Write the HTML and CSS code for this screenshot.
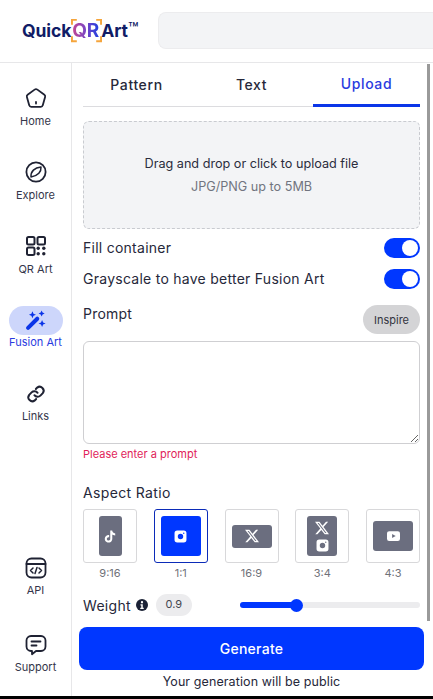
FILE: index.html
```html
<!DOCTYPE html>
<html lang="en">
<head>
<meta charset="utf-8">
<title>QuickQRArt</title>
<link rel="stylesheet" href="styles.css">
</head>
<body>
<div class="app">
  <header class="topbar">
    <div class="logo">
      <span>Quick</span>
      <span class="logo-qr">QR
        <svg class="logo-brackets" viewBox="0 0 32 24" fill="none" stroke="#f5a53c" stroke-width="2"><path d="M6 1H1v5M26 1h5v5M6 23H1v-5M26 23h5v-5"/></svg>
      </span>
      <span class="logo-art">Art</span><span class="logo-tm">™</span>
    </div>
    <div class="search"></div>
  </header>
  <div class="body">
    <nav class="sidebar">
      <a class="nav-item">
        <svg class="nav-icon" viewBox="0 0 24 24" fill="none" stroke="#1f2233" stroke-width="1.8" stroke-linejoin="round"><path d="M10.6 3.6a2.3 2.3 0 0 1 2.8 0l7 5.200a2 2 0 0 1 .7 2.200l-2.400 8.400a2 2 0 0 1-1.900 1.500H7.200a2 2 0 0 1-1.900-1.500L2.900 11a2 2 0 0 1 .7-2.200z"/><path d="M12 16v1.600" stroke-linecap="round"/></svg>
        <span>Home</span>
      </a>
      <a class="nav-item">
        <svg class="nav-icon" viewBox="0 0 24 24" fill="none" stroke="#1f2233" stroke-width="1.8" stroke-linejoin="round"><circle cx="12" cy="12" r="9.6"/><path d="M17 7c.4 4.600-2.800 9-10 10C6.600 11.500 10.500 7.500 17 7z" stroke-width="1.500"/></svg>
        <span>Explore</span>
      </a>
      <a class="nav-item">
        <svg class="nav-icon" viewBox="0 0 24 24" fill="none" stroke="#1f2233" stroke-width="2"><rect x="3" y="3" width="7.500" height="7.500" rx="1.500"/><rect x="13.500" y="3" width="7.500" height="7.500" rx="1.500"/><rect x="3" y="13.500" width="7.500" height="7.500" rx="1.500"/><g fill="#1f2233" stroke="none"><circle cx="14.200" cy="14.200" r="1.700"/><circle cx="19.800" cy="14.200" r="1.700"/><circle cx="14.200" cy="19.800" r="1.700"/><circle cx="19.800" cy="19.800" r="1.700"/></g></svg>
        <span>QR Art</span>
      </a>
      <a class="nav-item nav-item-active">
        <span class="nav-pill">
          <svg class="nav-icon" viewBox="0 0 24 24" fill="#0b35e8"><path d="M3.500 20.500L14 10" stroke="#0b35e8" stroke-width="4.600" stroke-linecap="round"/><path d="M8.500 1.500l1.200 2.800 2.800 1.200-2.800 1.200-1.200 2.800-1.200-2.800-2.800-1.200 2.800-1.200zM19 .5l1.100 2.400 2.400 1.100-2.400 1.100L19 7.500l-1.100-2.400L15.500 4l2.400-1.100zM19.500 11.500l1.200 2.800 2.800 1.200-2.800 1.200-1.200 2.800-1.200-2.800-2.800-1.200 2.800-1.200z"/></svg>
        </span>
        <span>Fusion Art</span>
      </a>
      <a class="nav-item nav-item-tight">
        <svg class="nav-icon" viewBox="-3 -3 30 30" fill="none" stroke="#1f2233" stroke-width="2.500" stroke-linecap="round"><path d="M10 13.500a5 5 0 0 0 7.500.5l3-3a5 5 0 0 0-7-7l-1.700 1.700"/><path d="M14 10.500a5 5 0 0 0-7.500-.5l-3 3a5 5 0 0 0 7 7l1.700-1.700"/></svg>
        <span>Links</span>
      </a>
      <a class="nav-item nav-item-tight nav-item-api">
        <svg class="nav-icon" viewBox="0 0 24 24" fill="none" stroke="#1f2233" stroke-width="1.800" stroke-linecap="round" stroke-linejoin="round"><rect x="2.500" y="2.500" width="19" height="19" rx="5"/><path d="M2.500 8h19" /><path d="M9 12l-2.500 2.500L9 17M15 12l2.500 2.500L15 17M13 11.500l-2 6" stroke-width="1.500"/></svg>
        <span>API</span>
      </a>
      <a class="nav-item nav-item-tight nav-item-last">
        <svg class="nav-icon" viewBox="0 0 24 24" fill="none" stroke="#1f2233" stroke-width="1.800" stroke-linecap="round" stroke-linejoin="round"><path d="M7 3h10a4.500 4.500 0 0 1 4.500 4.500v6A4.500 4.500 0 0 1 17 18h-5l-4 3.200V18H7a4.500 4.500 0 0 1-4.500-4.500v-6A4.500 4.500 0 0 1 7 3z"/><path d="M7.500 8.500h9M7.500 12.500h5"/></svg>
        <span>Support</span>
      </a>
    </nav>
    <main class="main">
      <div class="tabs">
        <button class="tab">Pattern</button>
        <button class="tab">Text</button>
        <button class="tab tab-active">Upload</button>
      </div>
      <div class="dropzone">
        <p class="drop-title">Drag and drop or click to upload file</p>
        <p class="drop-hint">JPG/PNG up to 5MB</p>
      </div>
      <div class="switch-row"><span class="switch-text">Fill container</span><span class="switch"></span></div>
      <div class="switch-row switch-row-second"><span class="switch-text">Grayscale to have better Fusion Art</span><span class="switch"></span></div>
      <div class="prompt-head"><span>Prompt</span><button class="inspire">Inspire</button></div>
      <textarea class="prompt-input"></textarea>
      <p class="error">Please enter a prompt</p>
      <h2 class="section-label">Aspect Ratio</h2>
      <div class="ratios">
        <div class="ratio">
          <div class="ratio-box"><div class="shape shape-9-16">
            <svg class="glyph-tiktok" viewBox="0 0 24 24" fill="#fff"><path d="M12.525.02c1.310-.02 2.610-.01 3.910-.02.08 1.530.63 3.090 1.750 4.170 1.120 1.110 2.700 1.620 4.240 1.790v4.030c-1.440-.05-2.890-.35-4.200-.97-.57-.26-1.100-.59-1.620-.93-.01 2.920.01 5.840-.02 8.750-.08 1.400-.54 2.790-1.350 3.940-1.310 1.920-3.580 3.170-5.910 3.210-1.430.08-2.860-.31-4.080-1.030-2.020-1.190-3.440-3.370-3.650-5.710-.02-.5-.03-1-.01-1.490.18-1.900 1.120-3.720 2.580-4.960 1.660-1.440 3.980-2.130 6.150-1.720.02 1.480-.04 2.960-.04 4.440-.99-.32-2.150-.23-3.020.37-.63.41-1.110 1.040-1.360 1.750-.21.51-.15 1.070-.14 1.610.24 1.640 1.820 3.020 3.500 2.870 1.120-.01 2.190-.66 2.770-1.610.19-.33.4-.67.41-1.060.1-1.790.06-3.570.07-5.360.01-4.030-.01-8.050.02-12.070z"/></svg>
          </div></div>
          <span class="ratio-label">9:16</span>
        </div>
        <div class="ratio">
          <div class="ratio-box ratio-box-active"><div class="shape shape-1-1 shape-active">
            <svg class="glyph-ig" viewBox="0 0 24 24"><path fill="#fff" fill-rule="evenodd" d="M6 1h12a5 5 0 0 1 5 5v12a5 5 0 0 1-5 5H6a5 5 0 0 1-5-5V6a5 5 0 0 1 5-5zm6 6a5 5 0 1 0 0 10 5 5 0 0 0 0-10z"/><circle cx="18" cy="6" r="1.300" fill="#0037ff"/></svg>
          </div></div>
          <span class="ratio-label">1:1</span>
        </div>
        <div class="ratio">
          <div class="ratio-box"><div class="shape shape-16-9">
            <svg class="glyph-x" viewBox="0 0 24 24" fill="#fff"><path d="M18.901 1.153h3.680l-8.040 9.190L24 22.846h-7.406l-5.800-7.584-6.638 7.584H.474l8.600-9.830L0 1.154h7.594l5.243 6.932ZM17.610 20.644h2.039L6.486 3.240H4.298Z"/></svg>
          </div></div>
          <span class="ratio-label">16:9</span>
        </div>
        <div class="ratio">
          <div class="ratio-box"><div class="shape shape-3-4">
            <svg class="glyph-x" viewBox="0 0 24 24" fill="#fff"><path d="M18.901 1.153h3.680l-8.040 9.190L24 22.846h-7.406l-5.800-7.584-6.638 7.584H.474l8.600-9.830L0 1.154h7.594l5.243 6.932ZM17.610 20.644h2.039L6.486 3.240H4.298Z"/></svg>
            <svg class="glyph-ig" viewBox="0 0 24 24"><path fill="#fff" fill-rule="evenodd" d="M6 1h12a5 5 0 0 1 5 5v12a5 5 0 0 1-5 5H6a5 5 0 0 1-5-5V6a5 5 0 0 1 5-5zm6 6a5 5 0 1 0 0 10 5 5 0 0 0 0-10z"/><circle cx="18" cy="6" r="1.300" fill="#6b6e7f"/></svg>
          </div></div>
          <span class="ratio-label">3:4</span>
        </div>
        <div class="ratio">
          <div class="ratio-box"><div class="shape shape-4-3">
            <svg class="glyph-yt" viewBox="0 0 24 18"><rect width="24" height="18" rx="4" fill="#fff"/><path d="M9.500 5.500l6.500 3.500-6.500 3.500z" fill="#6b6e7f"/></svg>
          </div></div>
          <span class="ratio-label">4:3</span>
        </div>
      </div>
      <div class="weight">
        <span class="weight-label">Weight</span>
        <svg class="info" viewBox="0 0 24 24"><circle cx="12" cy="12" r="12" fill="#1b2236"/><circle cx="12" cy="6.500" r="2.300" fill="#fff"/><path d="M9 10.500h4.500v7H15.500v2.500h-7v-2.500h2v-4.500H9z" fill="#fff"/></svg>
        <span class="weight-value">0.9</span>
        <div class="slider"><div class="slider-fill"></div><div class="slider-thumb"></div></div>
      </div>
      <button class="generate">Generate</button>
      <p class="public">Your generation will be public</p>
      <div class="scroll-thumb"></div>
    </main>
  </div>
</div>
</body>
</html>
```

FILE: styles.css
```css
* { box-sizing: border-box; }

html, body {
  margin: 0;
  height: 699px;
  overflow: hidden;
  background: #000;
}

body {
  font-family: Inter, "Liberation Sans", sans-serif;
  color: #26283a;
}

p, h2 { margin: 0; }

.app {
  height: 696px;
  background: #fff;
  display: flex;
  flex-direction: column;
}

.topbar {
  height: 63px;
  flex: none;
  display: flex;
  align-items: center;
  border-bottom: 1px solid #e7e7e9;
  padding-bottom: 1px;
}

.logo {
  width: 158px;
  padding-left: 22px;
  display: flex;
  align-items: center;
  font-size: 17.5px;
  font-weight: 700;
  color: #101c66;
  letter-spacing: -0.1px;
  white-space: nowrap;
}

.logo-qr {
  position: relative;
  margin: 0 2px 0 1px;
  font-size: 19px;
  background: linear-gradient(90deg, #c8478f, #7a45c4 50%, #1f3fe0);
  -webkit-background-clip: text;
  background-clip: text;
  color: transparent;
}

.logo-brackets {
  position: absolute;
  left: -1px;
  top: -1px;
  width: 31px;
  height: 25px;
}

.logo-tm {
  font-size: 17px;
  font-weight: 500;
  margin: -3px 0 0 0;
}

.search {
  flex: 1;
  height: 37px;
  background: #f3f4f6;
  border: 1px solid #ececee;
  border-right: 0;
  border-radius: 8px 0 0 8px;
}

.body {
  flex: 1;
  min-height: 0;
  display: flex;
}

.sidebar {
  width: 72px;
  flex: none;
  border-right: 1px solid #e7e7e9;
  padding-top: 23px;
  display: flex;
  flex-direction: column;
  align-items: center;
}

.nav-item {
  height: 74px;
  width: 100%;
  flex: none;
  display: flex;
  flex-direction: column;
  align-items: center;
  font-size: 11px;
  line-height: 14px;
  color: #34364a;
}

.nav-icon {
  width: 24px;
  height: 24px;
  margin-bottom: 4px;
  flex: none;
}

.nav-item-tight .nav-icon {
  margin-bottom: 3px;
}

.nav-item-active {
  color: #2a3be0;
  margin-top: -2px;
  margin-bottom: 2px;
}

.nav-pill {
  width: 54px;
  height: 29px;
  border-radius: 15px;
  background: #cdd6fb;
  display: flex;
  align-items: center;
  justify-content: center;
  margin-bottom: 0;
}

.nav-pill .nav-icon {
  width: 21px;
  height: 21px;
  margin: 0;
}

.nav-item-api {
  margin-top: auto;
  height: 77px;
}

.nav-item-last {
  height: 63px;
}

.main {
  flex: 1;
  position: relative;
  padding: 0 13px 0 11px;
  min-width: 0;
}

.tabs {
  display: flex;
  gap: 8px;
  height: 44px;
  border-bottom: 1px solid #dcdcdf;
}

.tab {
  flex: 1;
  border: 0;
  background: none;
  padding: 0 0 1px;
  font: 500 14px Inter, "Liberation Sans", sans-serif;
  letter-spacing: 0.6px;
  color: #26283a;
  height: 44px;
}

.tab-active {
  color: #2a3be0;
  border-bottom: 3px solid #0b35e8;
}

.dropzone {
  margin-top: 14px;
  height: 108px;
  background: #f3f4f6;
  border: 1px dashed #c9cbd0;
  border-radius: 6px;
  display: flex;
  flex-direction: column;
  align-items: center;
  justify-content: center;
  gap: 7px;
}

.drop-title {
  font-size: 12.65px;
  line-height: 16px;
  color: #2b2d3d;
}

.drop-hint {
  font-size: 12.65px;
  line-height: 16px;
  color: #71747f;
}

.switch-row {
  margin-top: 9px;
  height: 20px;
  display: flex;
  align-items: center;
  justify-content: space-between;
  font-size: 14px;
  letter-spacing: 0.26px;
}

.switch-text {
  padding-bottom: 2px;
}

.switch-row-second {
  margin-top: 11px;
}

.switch {
  position: relative;
  width: 36px;
  height: 20px;
  border-radius: 10px;
  background: #0037ff;
}

.switch::after {
  content: "";
  position: absolute;
  top: 2px;
  right: 2px;
  width: 16px;
  height: 16px;
  border-radius: 50%;
  background: #fff;
}

.prompt-head {
  margin-top: 16px;
  height: 29px;
  display: flex;
  justify-content: space-between;
  font-size: 14px;
  letter-spacing: 0.2px;
  line-height: 18px;
}

.inspire {
  width: 57px;
  height: 29px;
  border: 0;
  border-radius: 15px;
  background: #d4d4d6;
  padding: 0;
  font: 400 11px Inter, "Liberation Sans", sans-serif;
  color: #33353f;
}

.prompt-input {
  display: block;
  width: 100%;
  height: 103px;
  margin: 7px 0 0;
  border: 1px solid #cfcfd2;
  border-radius: 6px;
  background: #fff;
}

.error {
  margin-top: 3px;
  font-size: 11px;
  line-height: 14px;
  color: #e11d5a;
}

.section-label {
  margin-top: 23px;
  font-size: 14px;
  font-weight: 400;
  line-height: 18px;
  letter-spacing: 0.35px;
}

.ratios {
  margin-top: 7px;
  display: flex;
  justify-content: space-between;
}

.ratio {
  width: 54px;
  display: flex;
  flex-direction: column;
  align-items: center;
}

.ratio-box {
  width: 54px;
  height: 54px;
  border: 1px solid #d8d8da;
  border-radius: 3px;
  display: flex;
  align-items: center;
  justify-content: center;
}

.ratio-box-active {
  border-color: #0b2bb8;
}

.shape {
  background: #6b6e7f;
  border-radius: 3px;
  display: flex;
  flex-direction: column;
  align-items: center;
  justify-content: center;
}

.shape-active { background: #0037ff; }
.shape-9-16 { width: 23px; height: 40px; }
.shape-1-1 { width: 40px; height: 40px; }
.shape-16-9 { width: 40px; height: 23px; }
.shape-3-4 { width: 30px; height: 40px; gap: 4px; }
.shape-4-3 { width: 40px; height: 30px; }

.glyph-tiktok { width: 12px; height: 13px; }
.glyph-ig { width: 13px; height: 13px; }
.glyph-x { width: 14px; height: 14px; }
.glyph-yt { width: 13px; height: 10px; }

.ratio-label {
  margin-top: 3px;
  font-size: 11px;
  line-height: 14px;
  color: #6f7179;
}

.weight {
  margin-top: 14px;
  height: 22px;
  display: flex;
  align-items: center;
  font-size: 14px;
  letter-spacing: 0.3px;
}

.info {
  width: 12px;
  height: 12px;
  margin-left: 5px;
}

.weight-value {
  margin-left: 8px;
  width: 36px;
  height: 22px;
  border-radius: 11px;
  background: #ececee;
  font-size: 11px;
  letter-spacing: 0;
  line-height: 21px;
  text-align: center;
  color: #44464f;
}

.slider {
  position: relative;
  margin-left: 48px;
  flex: 1;
  height: 6px;
  border-radius: 3px;
  background: #ececee;
}

.slider-fill {
  width: 56px;
  height: 6px;
  border-radius: 3px;
  background: #0037ff;
}

.slider-thumb {
  position: absolute;
  left: 50px;
  top: -3px;
  width: 13px;
  height: 13px;
  border-radius: 50%;
  background: #0037ff;
}

.generate {
  display: block;
  width: 345px;
  height: 43px;
  margin: 11px 0 0 -4px;
  border: 0;
  border-radius: 8px;
  background: #0037ff;
  color: #fff;
  font: 500 14px Inter, "Liberation Sans", sans-serif;
  letter-spacing: 0.25px;
}

.public {
  margin-top: 3px;
  text-align: center;
  font-size: 12.5px;
  line-height: 17px;
  letter-spacing: 0.1px;
  margin-left: -4px;
  width: 345px;
  color: #26283a;
}

.scroll-thumb {
  position: absolute;
  top: 1px;
  right: 3px;
  width: 3px;
  height: 557px;
  background: #9a9a9a;
}
```
